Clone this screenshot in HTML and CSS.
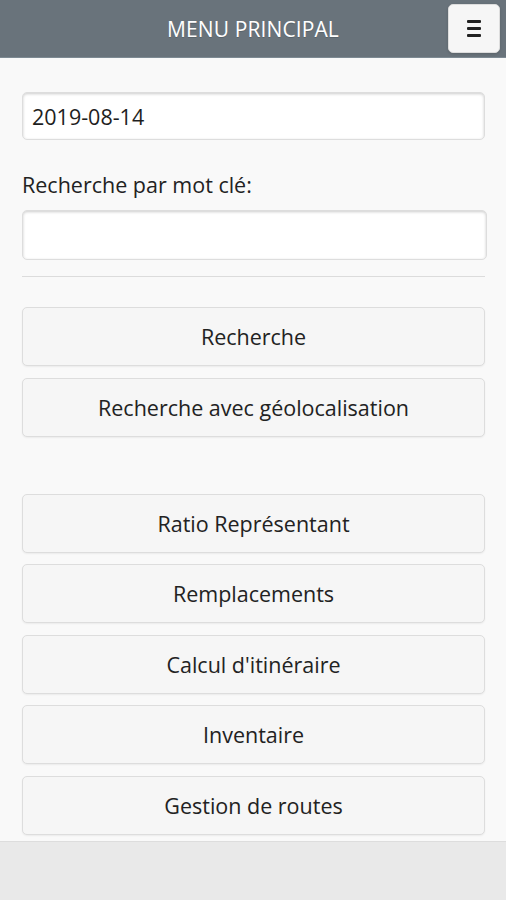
FILE: index.html
```html
<!DOCTYPE html>
<html lang="fr">
<head>
  <meta charset="UTF-8">
  <meta name="viewport" content="width=device-width, initial-scale=1.0">
  <title>Menu principal</title>
  <link rel="stylesheet" href="styles.css">
</head>
<body>
  <div class="page">
    <header class="header">
      <h1>MENU PRINCIPAL</h1>
      <button class="menu-btn" type="button" aria-label="Menu">
        <span></span><span></span><span></span>
      </button>
    </header>

    <main class="content">
      <input class="field field-date" type="text" value="2019-08-14">

      <label class="field-label" for="keyword">Recherche par mot clé:</label>
      <input class="field field-keyword" type="text" id="keyword">

      <hr class="sep">

      <div class="btn-list">
        <button class="btn" type="button">Recherche</button>
        <button class="btn" type="button">Recherche avec géolocalisation</button>
      </div>

      <div class="btn-list btn-list-tools">
        <button class="btn" type="button">Ratio Représentant</button>
        <button class="btn" type="button">Remplacements</button>
        <button class="btn" type="button">Calcul d'itinéraire</button>
        <button class="btn" type="button">Inventaire</button>
        <button class="btn" type="button">Gestion de routes</button>
      </div>
    </main>

    <footer class="footer"></footer>
  </div>
</body>
</html>
```

FILE: styles.css
```css
body {
  margin: 0;
  font-family: 'Open Sans', 'Noto Sans', sans-serif;
  background-color: #f9f9f9;
  color: #222;
}
.page {
  display: grid;
  grid-template-rows: 58px 1fr 59px;
  height: 100vh;
}

/* barre du haut */
.header {
  display: grid;
  grid-template-columns: 1fr auto 1fr;
  align-items: center;
  background-color: #69737b;
  border-bottom: 1px solid #7d8a93;
  box-sizing: border-box;
}
.header h1 {
  grid-column: 2;
  margin: 0;
  font-size: 21px;
  font-weight: 500;
  color: #fff;
  letter-spacing: 0.1px;
  text-shadow: 0 1px 0 #59636a;
}
.menu-btn {
  grid-column: 3;
  justify-self: end;
  margin-right: 6px;
  width: 52px;
  height: 49px;
  display: flex;
  flex-direction: column;
  align-items: center;
  justify-content: center;
  gap: 4px;
  background-color: #f6f6f6;
  border: 1px solid #dddddd;
  border-radius: 5px;
  box-shadow: 0 1px 3px rgba(0, 0, 0, 0.15);
  padding: 0;
}
.menu-btn span {
  display: block;
  width: 14px;
  height: 3px;
  background-color: #222;
  border-radius: 1px;
}

/* contenu */
.content {
  padding: 34px 21px 0 22px;
}
.field {
  display: block;
  width: 100%;
  box-sizing: border-box;
  font-family: inherit;
  font-size: 21.5px;
  color: #1e1e1e;
  background-color: #fff;
  border: 1px solid #dddddd;
  border-radius: 5px;
  box-shadow: inset 0 1px 3px rgba(0, 0, 0, 0.2);
  padding: 0 9px;
}
.field-date {
  height: 48px;
}
.field-keyword {
  height: 50px;
  width: calc(100% + 2px);
}
.field-label {
  display: block;
  margin-top: 31px;
  margin-bottom: 11px;
  font-size: 21.5px;
  line-height: 28px;
  color: #222;
}
.sep {
  margin: 16px 0 0;
  border: 0;
  border-top: 1px solid #dcdcdc;
}

.btn-list {
  display: flex;
  flex-direction: column;
  gap: 11.5px;
  margin-top: 30px;
}
.btn-list-tools {
  margin-top: 57px;
}
.btn {
  height: 59px;
  font-family: inherit;
  font-size: 21.5px;
  color: #222;
  text-shadow: 0 1px 0 #f3f3f3;
  background-color: #f6f6f6;
  border: 1px solid #dddddd;
  border-radius: 5px;
  box-shadow: 0 1px 2px rgba(0, 0, 0, 0.06);
  cursor: pointer;
}

.footer {
  background-color: #e9e9e9;
  border-top: 1px solid #dddddd;
}
```
